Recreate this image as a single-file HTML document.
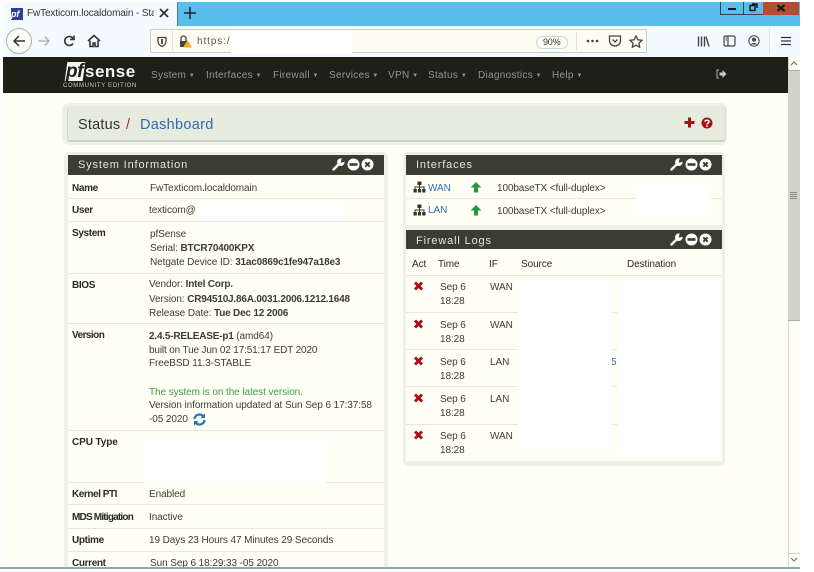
<!DOCTYPE html>
<html><head><meta charset="utf-8"><title>pfSense</title>
<style>
html,body{margin:0;padding:0;background:#fff}
#p{position:relative;width:814px;height:572px;overflow:hidden;background:#fff;font-family:"Liberation Sans",sans-serif;font-size:10px;color:#3c3c36;filter:blur(.35px)}
#p div,#p span,#p svg{position:absolute}
.t{white-space:nowrap;line-height:12px;letter-spacing:-.08px}
.b{font-weight:bold}
.n{color:#93958b;letter-spacing:.3px;top:70px}
small{font-size:6px;letter-spacing:0;margin-left:1px;vertical-align:1px}
.h{color:#e4e4da;font-size:11px;letter-spacing:.85px;line-height:14px;white-space:nowrap}
.l{background:#e6e8dc;height:1px}
.w{background:#fff}
.a{color:#2a2a24;letter-spacing:-.35px}
b{font-weight:bold;letter-spacing:-.2px}
</style></head><body><div id="p">
<!-- browser chrome -->
<div style="left:3px;top:2px;width:797px;height:55px;background:#f3fbff"></div>
<div style="left:178px;top:2px;width:622px;height:24px;background:#58bfec"></div>
<div style="left:177px;top:2px;width:1px;height:24px;background:#3b86a8"></div>
<div style="left:11px;top:8px;width:12px;height:12px;background:#2f3f9f"></div>
<span class="t b" style="left:11px;top:8px;color:#fff;font-style:italic;font-size:9px">pf</span>
<span class="t" style="left:27px;top:8px;width:127px;overflow:hidden;color:#333;letter-spacing:-.12px">FwTexticom.localdomain - Status: Dashboard</span>
<svg style="left:158px;top:7px" width="12" height="12" viewBox="0 0 12 12"><path d="M2 2L10 10M10 2L2 10" stroke="#333" stroke-width="1.8"/></svg>
<svg style="left:183px;top:6px" width="14" height="14" viewBox="0 0 14 14"><path d="M7 1V13M1 7H13" stroke="#1a2a30" stroke-width="1.6"/></svg>
<!-- window controls -->
<div style="left:720px;top:2px;width:79px;height:13px;background:#58bfec;border:1px solid #33444a;border-top:0;box-sizing:border-box"></div>
<div style="left:743px;top:2px;width:1px;height:13px;background:#33444a"></div>
<div style="left:763px;top:2px;width:36px;height:13px;background:#b84c32"></div>
<div style="left:728px;top:8px;width:8px;height:2px;background:#111"></div>
<svg style="left:747px;top:3px" width="11" height="9" viewBox="0 0 11 9"><path d="M3 2.500H8V7.500H3ZM5 1H10V5" fill="none" stroke="#111" stroke-width="1.4"/></svg>
<svg style="left:776px;top:4px" width="10" height="8" viewBox="0 0 10 8"><path d="M1.500 1L8.500 7M8.500 1L1.500 7" stroke="#111" stroke-width="2"/></svg>
<!-- nav buttons -->
<div style="left:6px;top:28px;width:24px;height:24px;border:1px solid #a9b3b3;border-radius:50%;background:#fbfdf4"></div>
<svg style="left:11px;top:34px" width="16" height="14" viewBox="0 0 16 14"><path d="M14 7H3M8 2L3 7L8 12" fill="none" stroke="#333" stroke-width="1.5"/></svg>
<svg style="left:37px;top:34px" width="14" height="14" viewBox="0 0 14 14"><path d="M1 7H12M7.500 2.500L12 7L7.500 11.500" fill="none" stroke="#a8adad" stroke-width="1.300"/></svg>
<svg style="left:62px;top:34px" width="14" height="14" viewBox="0 0 14 14"><path d="M11 9.500A4.500 4.500 0 1 1 11 4.500M12 1.500V5.500H8" fill="none" stroke="#333" stroke-width="1.600"/></svg>
<svg style="left:87px;top:34px" width="14" height="14" viewBox="0 0 14 14"><path d="M1 7L7 1.500L13 7M3 6.500V12.500H6V9H8V12.500H11V6.500" fill="none" stroke="#333" stroke-width="1.600"/></svg>
<!-- url bar -->
<div style="left:150px;top:29px;width:497px;height:24px;box-sizing:border-box;background:#fffdf2;border:1px solid #c6cbc8;border-radius:2px"></div>
<div style="left:172px;top:31px;width:1px;height:20px;background:#e2e4dc"></div>
<svg style="left:157px;top:36px" width="10" height="11" viewBox="0 0 10 11"><path d="M1 1.500H9V5.500C9 8 7 9.500 5 10.500C3 9.500 1 8 1 5.500Z" fill="none" stroke="#444" stroke-width="1.300"/><path d="M5 3V8" stroke="#444" stroke-width="1.800"/></svg>
<svg style="left:179px;top:35px" width="13" height="13" viewBox="0 0 13 13"><path d="M2 6V3.500A2.500 2.500 0 0 1 7 3.500V6" fill="none" stroke="#444" stroke-width="1.300"/><rect x="1" y="6" width="7" height="6" fill="#444"/><path d="M8.500 5L13 12.500H4Z" fill="#f0b020"/></svg>
<span class="t" style="left:197px;top:36px;color:#555;letter-spacing:.9px">https:/</span>
<div class="w" style="left:231px;top:30px;width:121px;height:23px"></div>
<div style="left:536px;top:36px;width:30px;height:11px;border:1px solid #c3d9e0;border-radius:7px;background:#fffff6"></div>
<span class="t" style="left:543px;top:36px;font-size:9px;letter-spacing:-.2px;color:#333">90%</span>
<div style="left:576px;top:32px;width:1px;height:18px;background:#e2e4dc"></div>
<svg style="left:586px;top:38px" width="14" height="6" viewBox="0 0 14 6"><circle cx="2" cy="3" r="1.300" fill="#444"/><circle cx="6.500" cy="3" r="1.300" fill="#444"/><circle cx="11" cy="3" r="1.300" fill="#444"/></svg>
<svg style="left:608px;top:35px" width="14" height="12" viewBox="0 0 14 12"><path d="M1.500 1H12.500V5.500A5.500 5.500 0 0 1 1.500 5.500Z" fill="none" stroke="#444" stroke-width="1.300"/><path d="M4.500 4.500L7 7L9.500 4.500" fill="none" stroke="#444" stroke-width="1.300"/></svg>
<svg style="left:629px;top:35px" width="14" height="13" viewBox="0 0 14 13"><path d="M7 1L8.800 4.800L13 5.300L9.900 8.100L10.700 12.200L7 10.200L3.300 12.200L4.100 8.100L1 5.300L5.200 4.800Z" fill="none" stroke="#444" stroke-width="1.300"/></svg>
<svg style="left:697px;top:36px" width="13" height="11" viewBox="0 0 13 11"><path d="M1.500 0.500V10.500M4.500 0.500V10.500M7.500 0.500V10.500M9 0.700L12 10.500" stroke="#444" stroke-width="1.400" fill="none"/></svg>
<svg style="left:723px;top:35px" width="13" height="12" viewBox="0 0 13 12"><rect x="1" y="1" width="11" height="10" rx="1.500" fill="none" stroke="#444" stroke-width="1.200"/><path d="M5 1V11" stroke="#444" stroke-width="1.200"/><path d="M2.500 3H4M2.500 5H4" stroke="#444"/></svg>
<svg style="left:748px;top:35px" width="12" height="12" viewBox="0 0 12 12"><circle cx="6" cy="6" r="5.200" fill="none" stroke="#444" stroke-width="1"/><circle cx="6" cy="4.600" r="2" fill="#444"/><path d="M2.500 9.500C3.500 7.500 8.500 7.500 9.500 9.500Z" fill="#444"/></svg>
<div style="left:769px;top:28px;width:1px;height:26px;background:#dfe4e2"></div>
<svg style="left:781px;top:36px" width="10" height="10" viewBox="0 0 10 10"><path d="M0 1.500H10M0 5H10M0 8.500H10" stroke="#333" stroke-width="1.300"/></svg>
<!-- page -->
<div style="left:3px;top:57px;width:797px;height:510px;background:#fffff5"></div>
<div style="left:3px;top:57px;width:785px;height:36px;background:#1e2018"></div>
<div style="left:66px;top:62px;width:18px;height:19px;background:#f4f4f0;transform:skewX(-8deg)"></div>
<span class="t b" style="left:66px;top:61px;font-size:19px;line-height:21px;font-style:italic;color:#1e2018;letter-spacing:-.5px">pf</span>
<span class="t b" style="left:85px;top:62px;font-size:17px;line-height:20px;color:#f4f4f0;letter-spacing:.5px">sense</span>
<span class="t" style="left:63px;top:82px;font-size:6px;line-height:8px;letter-spacing:.65px;color:#c8c8c0">COMMUNITY EDITION</span>
<span class="t n" style="left:151px">System<small> ▼</small></span>
<span class="t n" style="left:206px">Interfaces<small> ▼</small></span>
<span class="t n" style="left:273px">Firewall<small> ▼</small></span>
<span class="t n" style="left:329px">Services<small> ▼</small></span>
<span class="t n" style="left:388px">VPN<small> ▼</small></span>
<span class="t n" style="left:428px">Status<small> ▼</small></span>
<span class="t n" style="left:478px">Diagnostics<small> ▼</small></span>
<span class="t n" style="left:552px">Help<small> ▼</small></span>
<svg style="left:716px;top:69px" width="11" height="10" viewBox="0 0 11 10"><path d="M3 1H1V9H3" fill="none" stroke="#b0b2a8"/><path d="M3.500 3.500H6.500V1L10.500 5L6.500 9V6.500H3.500Z" fill="#c8cac0"/></svg>
<!-- scrollbar -->
<div style="left:788px;top:57px;width:12px;height:510px;background:#fffff5;border-left:1px solid #d0d5c7;box-sizing:border-box"></div>
<div style="left:788px;top:71px;width:12px;height:250px;background:#d0d5c7"></div>
<div style="left:788px;top:320px;width:12px;height:1px;background:#a9ad9f"></div>
<div style="left:788px;top:70px;width:12px;height:1px;background:#a9ad9f"></div>
<svg style="left:790px;top:60px" width="8" height="6" viewBox="0 0 8 6"><path d="M1 5L4 2L7 5" fill="none" stroke="#666" stroke-width="1"/></svg>
<svg style="left:790px;top:557px" width="8" height="6" viewBox="0 0 8 6"><path d="M1 1L4 4L7 1" fill="none" stroke="#666" stroke-width="1"/></svg>
<div style="left:788px;top:553px;width:12px;height:1px;background:#d0d5c7"></div>
<div style="left:790px;top:192px;width:7px;height:7px;background:repeating-linear-gradient(#8a8d80 0 1px,#d0d5c7 1px 2px)"></div>
<!-- title panel -->
<div style="left:62px;top:103px;width:665px;height:42px;background:#eef1e6;border-radius:7px"></div>
<div style="left:67px;top:106px;width:657px;height:34px;background:#e6ebdd;border-bottom:2px solid #cfd4c6;border-right:1px solid #d8dccf;border-left:1px solid #d8dccf;border-radius:3px"></div>
<span class="t" style="left:78px;top:117px;font-size:14.500px;line-height:17px;color:#333;letter-spacing:.2px">Status</span>
<span class="t" style="left:126px;top:117px;font-size:14.500px;line-height:17px;color:#a03038">/</span>
<span class="t" style="left:140px;top:117px;font-size:14.500px;line-height:17px;color:#2d6cb0;letter-spacing:.3px">Dashboard</span>
<svg style="left:684px;top:117px" width="11" height="11" viewBox="0 0 11 11"><path d="M5.500 0.500V10.500M0.500 5.500H10.500" stroke="#a80f1c" stroke-width="3"/></svg>
<svg style="left:701px;top:117px" width="12" height="12" viewBox="0 0 12 12"><circle cx="6" cy="6" r="5.500" fill="#a80f1c"/><path d="M4 4.700C4 2.800 8 2.800 8 4.700C8 6 6 6 6 7.500" fill="none" stroke="#fff" stroke-width="1.500"/><rect x="5.200" y="8.300" width="1.600" height="1.600" fill="#fff"/></svg>
<!-- system info -->
<div style="left:64px;top:152px;width:324px;height:415px;background:#eef1e6;border-radius:5px 5px 0 0"></div>
<div style="left:68px;top:155px;width:316px;height:412px;background:#fffff5"></div>
<div style="left:68px;top:155px;width:316px;height:20px;background:#3b3c32"></div>
<span class="h" style="left:78px;top:158px">System Information</span>
<svg style="left:331px;top:157px" width="15" height="15" viewBox="0 0 15 15"><path d="M2.500 12.500L8 7" stroke="#fff" stroke-width="2.400" stroke-linecap="round"/><circle cx="9.800" cy="5.200" r="3.800" fill="#fff"/><path d="M9.800 5.200L11 0.500H15V4L10.500 5.800Z" fill="#3b3c32"/></svg>
<svg style="left:347px;top:158px" width="13" height="13" viewBox="0 0 13 13"><circle cx="6.500" cy="6.500" r="6" fill="#fff"/><rect x="2.500" y="5.200" width="8" height="2.600" fill="#3b3c32"/></svg>
<svg style="left:361px;top:158px" width="13" height="13" viewBox="0 0 13 13"><circle cx="6.500" cy="6.500" r="6" fill="#fff"/><path d="M4.300 4.300L8.700 8.700M8.700 4.300L4.300 8.700" stroke="#3b3c32" stroke-width="2"/></svg>
<div class="l" style="left:68px;top:198px;width:316px"></div>
<div class="l" style="left:68px;top:221px;width:316px"></div>
<div class="l" style="left:68px;top:273px;width:316px"></div>
<div class="l" style="left:68px;top:323px;width:316px"></div>
<div class="l" style="left:68px;top:430px;width:316px"></div>
<div class="l" style="left:68px;top:482px;width:316px"></div>
<div class="l" style="left:68px;top:504px;width:316px"></div>
<div class="l" style="left:68px;top:528px;width:316px"></div>
<div class="l" style="left:68px;top:551px;width:316px"></div>
<span class="t b a" style="left:72px;top:183px">Name</span>
<span class="t" style="left:150px;top:183px">FwTexticom.localdomain</span>
<span class="t b a" style="left:72px;top:205px">User</span>
<span class="t" style="left:149px;top:205px">texticom@</span>
<div class="w" style="left:198px;top:202px;width:148px;height:19px"></div>
<span class="t b a" style="left:72px;top:228px">System</span>
<span class="t" style="left:150px;top:229px">pfSense</span>
<span class="t" style="left:150px;top:243px">Serial: <b>BTCR70400KPX</b></span>
<span class="t" style="left:150px;top:257px">Netgate Device ID: <b>31ac0869c1fe947a18e3</b></span>
<span class="t b a" style="left:72px;top:280px">BIOS</span>
<span class="t" style="left:149px;top:279px">Vendor: <b>Intel Corp.</b></span>
<span class="t" style="left:149px;top:294px">Version: <b>CR94510J.86A.0031.2006.1212.1648</b></span>
<span class="t" style="left:149px;top:308px">Release Date: <b>Tue Dec 12 2006</b></span>
<span class="t b a" style="left:72px;top:330px;letter-spacing:-.55px">Version</span>
<span class="t" style="left:149px;top:331px"><b>2.4.5-RELEASE-p1</b> (amd64)</span>
<span class="t" style="left:149px;top:345px;letter-spacing:-.15px">built on Tue Jun 02 17:51:17 EDT 2020</span>
<span class="t" style="left:149px;top:358px">FreeBSD 11.3-STABLE</span>
<span class="t" style="left:149px;top:387px;color:#3f9a4a">The system is on the latest version.</span>
<span class="t" style="left:149px;top:400px">Version information updated at Sun Sep 6 17:37:58</span>
<span class="t" style="left:149px;top:414px">-05 2020</span>
<svg style="left:193px;top:413px" width="13" height="13" viewBox="0 0 13 13"><path d="M1.500 6A5 5 0 0 1 10 3M11.500 7A5 5 0 0 1 3 10" fill="none" stroke="#2d72b8" stroke-width="2.300"/><path d="M12 0.500V5H7.500ZM1 12.500V8H5.500Z" fill="#2d72b8"/></svg>
<span class="t b a" style="left:72px;top:437px;letter-spacing:-.1px">CPU Type</span>
<div class="w" style="left:143px;top:437px;width:183px;height:46px"></div>
<span class="t b a" style="left:72px;top:489px;letter-spacing:-.45px">Kernel PTI</span>
<span class="t" style="left:149px;top:489px">Enabled</span>
<span class="t b a" style="left:72px;top:512px;letter-spacing:-.8px">MDS Mitigation</span>
<span class="t" style="left:149px;top:512px">Inactive</span>
<span class="t b a" style="left:72px;top:535px">Uptime</span>
<span class="t" style="left:149px;top:535px">19 Days 23 Hours 47 Minutes 29 Seconds</span>
<span class="t b a" style="left:72px;top:558px">Current</span>
<span class="t" style="left:150px;top:558px">Sun Sep 6 18:29:33 -05 2020</span>
<!-- interfaces -->
<div style="left:403px;top:152px;width:322px;height:314px;background:#eef1e6;border-radius:5px"></div>
<div style="left:406px;top:155px;width:316px;height:70px;background:#fffff5"></div>
<div style="left:406px;top:155px;width:316px;height:20px;background:#3b3c32"></div>
<span class="h" style="left:416px;top:158px">Interfaces</span>
<svg style="left:669px;top:157px" width="15" height="15" viewBox="0 0 15 15"><path d="M2.500 12.500L8 7" stroke="#fff" stroke-width="2.400" stroke-linecap="round"/><circle cx="9.800" cy="5.200" r="3.800" fill="#fff"/><path d="M9.800 5.200L11 0.500H15V4L10.500 5.800Z" fill="#3b3c32"/></svg>
<svg style="left:685px;top:158px" width="13" height="13" viewBox="0 0 13 13"><circle cx="6.500" cy="6.500" r="6" fill="#fff"/><rect x="2.500" y="5.200" width="8" height="2.600" fill="#3b3c32"/></svg>
<svg style="left:699px;top:158px" width="13" height="13" viewBox="0 0 13 13"><circle cx="6.500" cy="6.500" r="6" fill="#fff"/><path d="M4.300 4.300L8.700 8.700M8.700 4.300L4.300 8.700" stroke="#3b3c32" stroke-width="2"/></svg>
<div class="l" style="left:406px;top:198px;width:316px"></div>
<svg style="left:413px;top:181px" width="13" height="12" viewBox="0 0 13 12"><path d="M4.500 0.500H8.500V4H4.500ZM0.500 8H3.800V11.500H0.500ZM4.900 8H8.100V11.500H4.900ZM9.200 8H12.500V11.500H9.200Z" fill="#33352c"/><path d="M6.500 4V8M2 8V6H11V8" fill="none" stroke="#33352c"/></svg>
<span class="t" style="left:428px;top:183px;color:#2d6cb0">WAN</span>
<svg style="left:470px;top:181px" width="12" height="12" viewBox="0 0 12 12"><path d="M6 1L11.500 6.500H8V11.500H4V6.500H0.500Z" fill="#24963a"/></svg>
<span class="t" style="left:497px;top:183px;letter-spacing:-.12px">100baseTX &lt;full-duplex&gt;</span>
<svg style="left:413px;top:204px" width="13" height="12" viewBox="0 0 13 12"><path d="M4.500 0.500H8.500V4H4.500ZM0.500 8H3.800V11.500H0.500ZM4.900 8H8.100V11.500H4.900ZM9.200 8H12.500V11.500H9.200Z" fill="#33352c"/><path d="M6.500 4V8M2 8V6H11V8" fill="none" stroke="#33352c"/></svg>
<span class="t" style="left:428px;top:205px;color:#2d6cb0">LAN</span>
<svg style="left:470px;top:204px" width="12" height="12" viewBox="0 0 12 12"><path d="M6 1L11.500 6.500H8V11.500H4V6.500H0.500Z" fill="#24963a"/></svg>
<span class="t" style="left:497px;top:206px;letter-spacing:-.12px">100baseTX &lt;full-duplex&gt;</span>
<div class="w" style="left:636px;top:181px;width:75px;height:38px"></div>
<!-- firewall logs -->
<div style="left:406px;top:230px;width:316px;height:231px;background:#fffff5"></div>
<div style="left:406px;top:230px;width:316px;height:19px;background:#3b3c32"></div>
<span class="h" style="left:416px;top:234px">Firewall Logs</span>
<svg style="left:669px;top:232px" width="15" height="15" viewBox="0 0 15 15"><path d="M2.500 12.500L8 7" stroke="#fff" stroke-width="2.400" stroke-linecap="round"/><circle cx="9.800" cy="5.200" r="3.800" fill="#fff"/><path d="M9.800 5.200L11 0.500H15V4L10.500 5.800Z" fill="#3b3c32"/></svg>
<svg style="left:685px;top:233px" width="13" height="13" viewBox="0 0 13 13"><circle cx="6.500" cy="6.500" r="6" fill="#fff"/><rect x="2.500" y="5.200" width="8" height="2.600" fill="#3b3c32"/></svg>
<svg style="left:699px;top:233px" width="13" height="13" viewBox="0 0 13 13"><circle cx="6.500" cy="6.500" r="6" fill="#fff"/><path d="M4.300 4.300L8.700 8.700M8.700 4.300L4.300 8.700" stroke="#3b3c32" stroke-width="2"/></svg>
<span class="t" style="left:412px;top:259px;color:#2a2a24">Act</span>
<span class="t" style="left:438px;top:259px;color:#2a2a24">Time</span>
<span class="t" style="left:489px;top:259px;color:#2a2a24">IF</span>
<span class="t" style="left:521px;top:259px;color:#2a2a24">Source</span>
<span class="t" style="left:627px;top:259px;color:#2a2a24">Destination</span>
<div class="l" style="left:406px;top:275px;width:316px"></div>
<div class="l" style="left:406px;top:312px;width:316px"></div>
<div class="l" style="left:406px;top:349px;width:316px"></div>
<div class="l" style="left:406px;top:386px;width:316px"></div>
<div class="l" style="left:406px;top:424px;width:316px"></div>
<svg style="left:413px;top:281px" width="11" height="10" viewBox="0 0 11 10"><path d="M2 1.500L9 8.500M9 1.500L2 8.500" stroke="#a80f1c" stroke-width="3"/></svg>
<svg style="left:413px;top:319px" width="11" height="10" viewBox="0 0 11 10"><path d="M2 1.500L9 8.500M9 1.500L2 8.500" stroke="#a80f1c" stroke-width="3"/></svg>
<svg style="left:413px;top:356px" width="11" height="10" viewBox="0 0 11 10"><path d="M2 1.500L9 8.500M9 1.500L2 8.500" stroke="#a80f1c" stroke-width="3"/></svg>
<svg style="left:413px;top:393px" width="11" height="10" viewBox="0 0 11 10"><path d="M2 1.500L9 8.500M9 1.500L2 8.500" stroke="#a80f1c" stroke-width="3"/></svg>
<svg style="left:413px;top:430px" width="11" height="10" viewBox="0 0 11 10"><path d="M2 1.500L9 8.500M9 1.500L2 8.500" stroke="#a80f1c" stroke-width="3"/></svg>
<span class="t" style="left:440px;top:282px">Sep 6</span><span class="t" style="left:440px;top:296px">18:28</span><span class="t" style="left:490px;top:282px">WAN</span>
<span class="t" style="left:440px;top:320px">Sep 6</span><span class="t" style="left:440px;top:334px">18:28</span><span class="t" style="left:490px;top:320px">WAN</span>
<span class="t" style="left:440px;top:357px">Sep 6</span><span class="t" style="left:440px;top:371px">18:28</span><span class="t" style="left:490px;top:357px">LAN</span>
<span class="t" style="left:440px;top:394px">Sep 6</span><span class="t" style="left:440px;top:408px">18:28</span><span class="t" style="left:490px;top:394px">LAN</span>
<span class="t" style="left:440px;top:431px">Sep 6</span><span class="t" style="left:440px;top:445px">18:28</span><span class="t" style="left:490px;top:431px">WAN</span>
<span class="t" style="left:611px;top:357px;color:#2d6cb0">5</span>
<div class="w" style="left:518px;top:281px;width:94px;height:164px"></div>
<div class="w" style="left:618px;top:281px;width:104px;height:171px"></div>
<!-- bottom -->
<div style="left:0;top:567px;width:800px;height:2px;background:#8fa9ad"></div>
<div style="left:0;top:569px;width:814px;height:3px;background:#fff"></div>
</div></body></html>
